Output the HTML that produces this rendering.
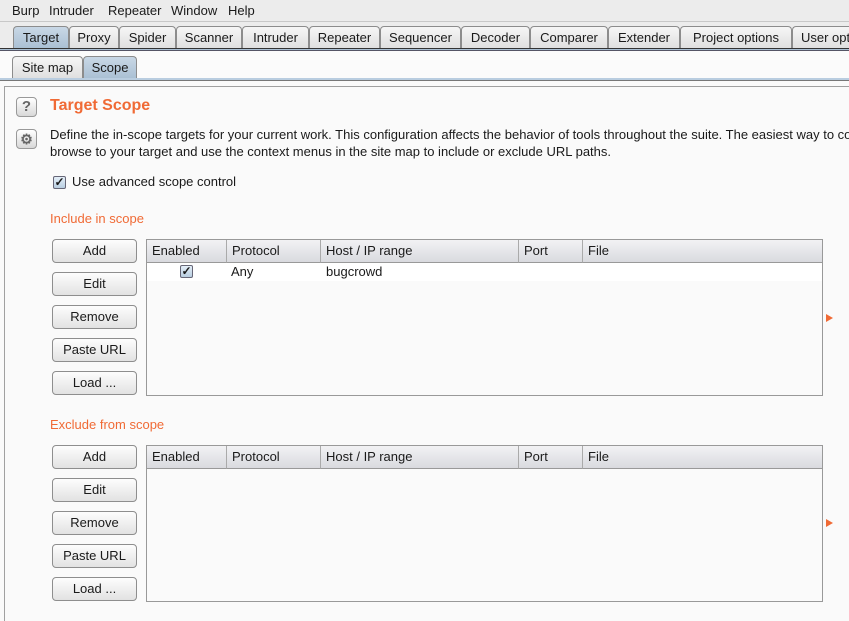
<!DOCTYPE html>
<html><head><style>
*{margin:0;padding:0;box-sizing:border-box}
html,body{width:849px;height:621px;overflow:hidden}
body{background:#fafafa;font-family:"Liberation Sans",sans-serif;font-size:13px;color:#1a1a1a}
#w{position:relative;width:849px;height:621px;overflow:hidden}
.a{position:absolute}
.menu{left:0;top:0;width:849px;height:22px;background:#ececec;border-bottom:1px solid #c8c8c8}
.menu span{position:absolute;top:3px}
.tabbar{left:0;top:22px;width:849px;height:28px;background:#ececec}
.tab{position:absolute;top:26px;height:23px;border:1px solid #8c8c8c;border-bottom:none;border-radius:4px 4px 0 0;background:linear-gradient(#f6f6f6,#dedede);text-align:center;line-height:21px;font-size:13px;overflow:hidden;white-space:nowrap}
.tab.sel{background:linear-gradient(#c9d8e6,#a9bfd3)}
.line1{left:0;top:48px;width:849px;height:3px;background:#a9bfd3;border-top:1px solid #333;border-bottom:1px solid #556}
.sub{left:0;top:51px;width:849px;height:30px;background:#fbfbfb}
.line2{left:0;top:78px;width:849px;height:3px;background:#b9cde0;border-bottom:1px solid #777}
.panel{left:4px;top:86px;width:845px;height:535px;border-left:1px solid #a0a0a0;border-top:1px solid #a0a0a0;background:#fafafa}
.or{color:#f06a35}
.btn{position:absolute;left:52px;width:85px;height:24px;border:1px solid #8e8e8e;border-radius:4px;background:linear-gradient(#fdfdfd,#e2e2e2);text-align:center;line-height:22px}
.tbl{position:absolute;left:146px;width:677px;height:157px;border:1px solid #999;background:#fafafa}
.th{position:absolute;top:0;height:23px;border-right:1px solid #aaa;background:linear-gradient(#f2f2f4,#d9dadf);border-bottom:1px solid #999;line-height:21px;padding-left:5px}
.cb{position:absolute;width:13px;height:13px;border:1px solid #667;border-radius:2px;background:linear-gradient(#e4eef8,#b8cde0);font-size:12px;line-height:11px;text-align:center;font-weight:bold}
.arr{position:absolute;left:826px;width:0;height:0;border-left:7px solid #f06a35;border-top:4px solid transparent;border-bottom:4px solid transparent}
.ic{position:absolute;left:16px;width:21px;height:20px;border:1px solid #999;border-radius:4px;background:linear-gradient(#fff,#d8d8d8);text-align:center;font-weight:bold;color:#666;line-height:18px;font-size:15px}
.desc{left:50px;top:126px;width:799px;overflow:hidden;white-space:nowrap;line-height:17px}
</style></head><body><div id="w">
<div class="a menu"><span style="left:12px">Burp</span><span style="left:49px">Intruder</span><span style="left:108px">Repeater</span><span style="left:171px">Window</span><span style="left:228px">Help</span></div>
<div class="a tabbar"></div>
<div class="tab sel" style="left:13px;width:56px">Target</div>
<div class="tab" style="left:69px;width:50px">Proxy</div>
<div class="tab" style="left:119px;width:57px">Spider</div>
<div class="tab" style="left:176px;width:66px">Scanner</div>
<div class="tab" style="left:242px;width:67px">Intruder</div>
<div class="tab" style="left:309px;width:71px">Repeater</div>
<div class="tab" style="left:380px;width:81px">Sequencer</div>
<div class="tab" style="left:461px;width:69px">Decoder</div>
<div class="tab" style="left:530px;width:78px">Comparer</div>
<div class="tab" style="left:608px;width:72px">Extender</div>
<div class="tab" style="left:680px;width:112px">Project options</div>
<div class="tab" style="left:792px;width:57px;text-align:left;padding-left:8px;border-right:none;border-radius:4px 0 0 0">User options</div>
<div class="a line1"></div>
<div class="a sub"></div>
<div class="tab" style="left:12px;top:56px;width:71px">Site map</div>
<div class="tab sel" style="left:83px;top:56px;width:54px">Scope</div>
<div class="a line2"></div>
<div class="a panel"></div>
<div class="ic" style="top:97px">?</div>
<div class="ic" style="top:129px;font-size:14px">⚙</div>
<div class="a or" style="left:50px;top:97px;font-size:16px;font-weight:bold">Target Scope</div>
<div class="a desc">Define the in-scope targets for your current work. This configuration affects the behavior of tools throughout the suite. The easiest way to configure scope is to<br>browse to your target and use the context menus in the site map to include or exclude URL paths.</div>
<div class="cb" style="left:53px;top:176px">✓</div>
<div class="a" style="left:72px;top:174px">Use advanced scope control</div>
<div class="a or" style="left:50px;top:211px">Include in scope</div>
<div class="btn" style="top:239px">Add</div><div class="btn" style="top:272px">Edit</div><div class="btn" style="top:305px">Remove</div><div class="btn" style="top:338px">Paste URL</div><div class="btn" style="top:371px">Load ...</div>
<div class="tbl" style="top:239px">
<div class="th" style="left:0;width:80px">Enabled</div><div class="th" style="left:80px;width:94px">Protocol</div><div class="th" style="left:174px;width:198px">Host / IP range</div><div class="th" style="left:372px;width:64px">Port</div><div class="th" style="left:436px;width:239px;border-right:none">File</div>
<div style="position:absolute;top:23px;left:0;width:675px;height:18px;background:#fff"></div>
<div class="cb" style="left:33px;top:25px">✓</div>
<div style="position:absolute;left:84px;top:24px">Any</div>
<div style="position:absolute;left:179px;top:24px">bugcrowd</div>
</div>
<div class="arr" style="top:314px"></div>
<div class="a or" style="left:50px;top:417px">Exclude from scope</div>
<div class="btn" style="top:445px">Add</div><div class="btn" style="top:478px">Edit</div><div class="btn" style="top:511px">Remove</div><div class="btn" style="top:544px">Paste URL</div><div class="btn" style="top:577px">Load ...</div>
<div class="tbl" style="top:445px">
<div class="th" style="left:0;width:80px">Enabled</div><div class="th" style="left:80px;width:94px">Protocol</div><div class="th" style="left:174px;width:198px">Host / IP range</div><div class="th" style="left:372px;width:64px">Port</div><div class="th" style="left:436px;width:239px;border-right:none">File</div>
</div>
<div class="arr" style="top:519px"></div>
</div></body></html>
